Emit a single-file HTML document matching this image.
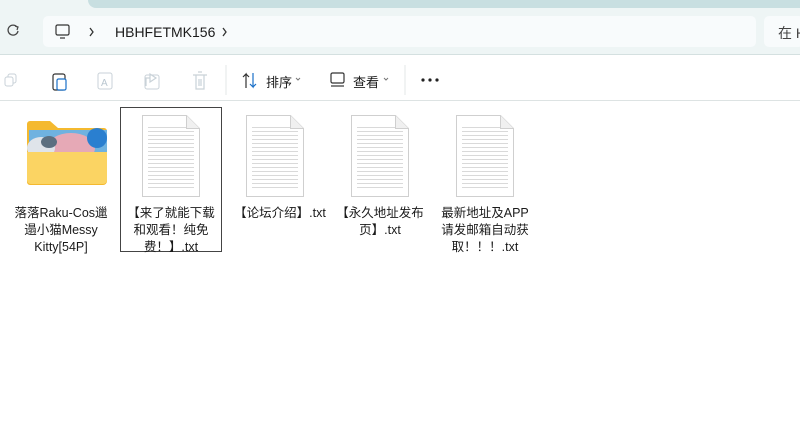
<html><head><style>
body{margin:0;width:800px;height:437px;background:#fff;font-family:"Liberation Sans","Noto Sans CJK SC",sans-serif;overflow:hidden;position:relative}
.a{position:absolute}
.lbl{position:absolute;width:90px;text-align:center;font-size:12.5px;line-height:17px;color:#1a1a1a}
.doc{position:absolute;width:58px;height:82px}
</style></head><body>
<div class="a" style="left:0;top:0;width:800px;height:55px;background:#eef5f5"></div>
<div class="a" style="left:88px;top:0;width:712px;height:8px;background:#c8dfe1;border-radius:0 0 0 8px"></div>
<div class="a" style="left:43px;top:16px;width:713px;height:31px;background:#f8fbfc;border-radius:5px"></div>
<div class="a" style="left:764px;top:16px;width:40px;height:31px;background:#f8fbfc;border-radius:5px"></div>
<div class="a" style="left:778px;top:23px;font-size:14px;color:#444;white-space:nowrap">在 H</div>
<div class="a" style="left:0;top:54px;width:800px;height:1px;background:#d4e0e0"></div>
<div class="a" style="left:0;top:100px;width:800px;height:1px;background:#dde3e3"></div>
<svg class="a" style="left:0;top:0" width="800" height="100">
<path d="M17 27a5 5 0 1 0 1 4" fill="none" stroke="#444" stroke-width="1.3"/><path d="M15 26l3 1-1 3" fill="none" stroke="#444" stroke-width="1.2"/>
<rect x="56" y="25" width="13" height="10" rx="1.5" fill="none" stroke="#333" stroke-width="1.2"/><path d="M60 38h5" stroke="#333" stroke-width="1.2"/>
<path d="M90 28l3 4-3 4M223 28l3 4-3 4" fill="none" stroke="#333" stroke-width="1.3"/>
<rect x="8" y="74" width="8" height="9" rx="2" fill="none" stroke="#c9d2d8"/><rect x="5" y="77" width="8" height="9" rx="2" fill="#fff" stroke="#c9d2d8"/>
<rect x="53" y="74" width="12" height="16" rx="2" fill="none" stroke="#333" stroke-width="1.2"/><rect x="57" y="79" width="9" height="11" rx="1.5" fill="#fff" stroke="#1a70c8" stroke-width="1.2"/>
<rect x="98" y="73" width="14" height="16" rx="2" fill="none" stroke="#c9d2d8"/><text x="101" y="86" font-size="10" fill="#b9c6d0" font-family="Liberation Sans">A</text>
<path d="M146 86v-8h4M150 74l6 4-6 4z" fill="none" stroke="#c9d2d8" stroke-width="1.2"/><rect x="145" y="75" width="14" height="14" rx="2" fill="none" stroke="#c9d2d8"/>
<path d="M193 75h14M196 75v14h8v-14M198 72h4M199 79v7M201 79v7" fill="none" stroke="#c9d2d8" stroke-width="1.2"/>
<path d="M226 65v30M405 65v30" stroke="#e3e7e7"/>
<path d="M246 88v-14l-3 3M246 74l3 3" fill="none" stroke="#333" stroke-width="1.2"/><path d="M253 73v14l-3-3M253 87l3-3" fill="none" stroke="#1a70c8" stroke-width="1.2"/>
<path d="M296 78l2 2 2-2M384 78l2 2 2-2" fill="none" stroke="#777"/>
<rect x="331" y="73" width="13" height="10" rx="1.5" fill="none" stroke="#333" stroke-width="1.2"/><path d="M331 86h13" stroke="#333" stroke-width="1.2"/>
<circle cx="423" cy="80" r="1.6" fill="#222"/><circle cx="430" cy="80" r="1.6" fill="#222"/><circle cx="437" cy="80" r="1.6" fill="#222"/>
</svg>
<div class="a" style="left:115px;top:24px;font-size:14px;color:#1a1a1a">HBHFETMK156</div>
<div class="a" style="left:266px;top:72px;font-size:13px;color:#1a1a1a">排序</div>
<div class="a" style="left:353px;top:72px;font-size:13px;color:#1a1a1a">查看</div>

<svg class="a" style="left:25px;top:120px" width="84" height="68">
<path d="M2 4a3 3 0 0 1 3-3h20l8 7h46a3 3 0 0 1 3 3v50a4 4 0 0 1-4 4H5a3 3 0 0 1-3-3z" fill="#f4b92f"/>
<rect x="4" y="10" width="78" height="32" fill="#6fb2e0"/>
<ellipse cx="46" cy="28" rx="24" ry="15" fill="#e6a9b6"/><ellipse cx="16" cy="28" rx="14" ry="11" fill="#dfe4ea"/><ellipse cx="24" cy="22" rx="8" ry="6" fill="#5c6f80"/><ellipse cx="72" cy="18" rx="10" ry="10" fill="#2a7fd0"/>
<path d="M2 32h80v28a4 4 0 0 1-4 4H6a4 4 0 0 1-4-4z" fill="#fbd463"/>
</svg>
<div class="lbl" style="left:12px;top:205px;width:98px">落落Raku-Cos邋遢小猫Messy Kitty[54P]</div>

<div class="a" style="left:120px;top:107px;width:102px;height:145px;border:1px solid #444;box-sizing:border-box"></div>
<svg width="0" height="0" style="position:absolute"><defs>
<pattern id="ln" width="58" height="4" patternUnits="userSpaceOnUse"><rect x="0" y="0" width="58" height="1" fill="#d9d9d9"/></pattern></defs></svg>
<svg class="doc" style="left:142px;top:115px"><path d="M0.5 0.5h44l13 13v68h-57z" fill="#fff" stroke="#cfcfcf"/><rect x="6" y="10" width="46" height="66" fill="url(#ln)"/><path d="M44.5 .5v13h13" fill="#f0f0f0" stroke="#cfcfcf"/></svg>
<div class="lbl" style="left:126px;top:205px">【来了就能下载和观看！纯免费！】.txt</div>
<svg class="doc" style="left:246px;top:115px"><path d="M0.5 0.5h44l13 13v68h-57z" fill="#fff" stroke="#cfcfcf"/><rect x="6" y="10" width="46" height="66" fill="url(#ln)"/><path d="M44.5 .5v13h13" fill="#f0f0f0" stroke="#cfcfcf"/></svg>
<div class="lbl" style="left:225px;top:205px;width:110px">【论坛介绍】.txt</div>
<svg class="doc" style="left:351px;top:115px"><path d="M0.5 0.5h44l13 13v68h-57z" fill="#fff" stroke="#cfcfcf"/><rect x="6" y="10" width="46" height="66" fill="url(#ln)"/><path d="M44.5 .5v13h13" fill="#f0f0f0" stroke="#cfcfcf"/></svg>
<div class="lbl" style="left:335px;top:205px">【永久地址发布页】.txt</div>
<svg class="doc" style="left:456px;top:115px"><path d="M0.5 0.5h44l13 13v68h-57z" fill="#fff" stroke="#cfcfcf"/><rect x="6" y="10" width="46" height="66" fill="url(#ln)"/><path d="M44.5 .5v13h13" fill="#f0f0f0" stroke="#cfcfcf"/></svg>
<div class="lbl" style="left:440px;top:205px">最新地址及APP请发邮箱自动获取！！！.txt</div>
</body></html>
